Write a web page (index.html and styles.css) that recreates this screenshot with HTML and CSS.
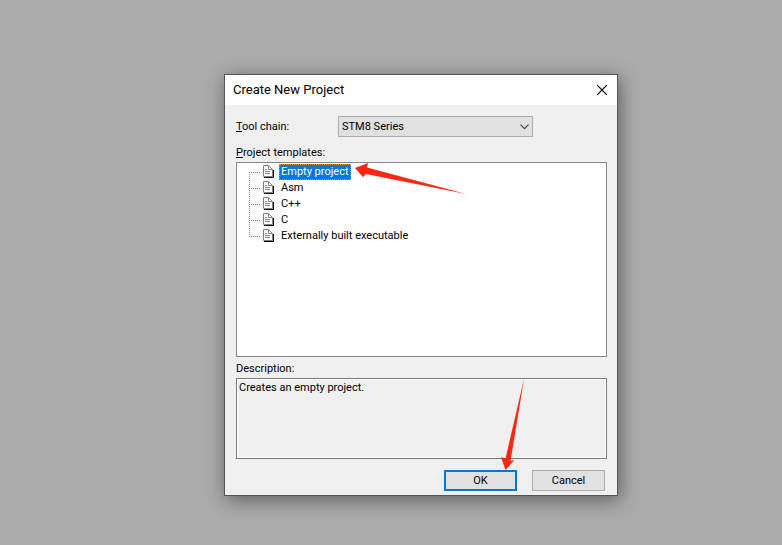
FILE: index.html
```
<!DOCTYPE html>
<html lang="en">
<head>
    <meta charset="UTF-8">
    <meta name="viewport" content="width=device-width, initial-scale=1.0">
    <title>Create New Project</title>
    <link rel="stylesheet" href="styles.css">
</head>
<body>
    <svg class="symbols" aria-hidden="true">
        <symbol id="page" viewBox="0 0 12 14">
            <path d="M.5 .5h5l4 4v7h-9z" fill="#fff" stroke="#808080"/>
            <path d="M5.500 .5v4h4" fill="none" stroke="#808080"/>
            <path d="M10.500 5v7.500H1" fill="none" stroke="#000"/>
            <path d="M2 4.500h2M2 6.500h5M2 8.500h5" stroke="#808080"/>
        </symbol>
    </svg>

    <form class="dialog" role="dialog" aria-labelledby="dialogTitle">
        <div class="title-bar">
            <h1 id="dialogTitle">Create New Project</h1>
            <button type="button" class="close-btn" aria-label="Close">
                <svg width="10" height="10" viewBox="0 0 10 10"><path d="M0 0l10 10M10 0L0 10" stroke="#000" stroke-width="1.2"/></svg>
            </button>
        </div>
        <div class="content">
            <div class="chain-row">
                <label for="toolChain"><u>T</u>ool chain:</label>
                <div class="select-wrap">
                    <select id="toolChain">
                        <option>STM8 Series</option>
                    </select>
                    <svg class="chevron" width="9" height="6" viewBox="0 0 9 6"><path d="M.5 .7l4 4 4-4" fill="none" stroke="#444" stroke-width="1.2"/></svg>
                </div>
            </div>

            <div class="field-label" id="templatesLabel"><u>P</u>roject templates:</div>
            <ul class="tree" role="tree" aria-labelledby="templatesLabel">
                <li role="treeitem" aria-selected="true"><svg class="page-icon"><use href="#page"/></svg><span class="name selected">Empty project</span></li>
                <li role="treeitem"><svg class="page-icon"><use href="#page"/></svg><span class="name">Asm</span></li>
                <li role="treeitem"><svg class="page-icon"><use href="#page"/></svg><span class="name">C++</span></li>
                <li role="treeitem"><svg class="page-icon"><use href="#page"/></svg><span class="name">C</span></li>
                <li role="treeitem"><svg class="page-icon"><use href="#page"/></svg><span class="name">Externally built executable</span></li>
            </ul>

            <label class="field-label" for="description">Description:</label>
            <textarea id="description" class="description" readonly>Creates an empty project.</textarea>

            <div class="buttons">
                <button type="submit" class="btn default">OK</button>
                <button type="button" class="btn">Cancel</button>
            </div>
        </div>

        <!-- Red pointer arrows -->
        <svg class="arrow arrow-template" width="112" height="32" viewBox="0 0 112 32" aria-hidden="true">
            <path d="M0 5L13 0 12 4.500 111 31 11 11 8 14z" fill="#ff2513"/>
        </svg>
        <svg class="arrow arrow-ok" width="24" height="92" viewBox="0 0 24 92" aria-hidden="true">
            <path d="M4.500 91L0 78l4.500 1.500L23 0 9.500 82 13.500 81z" fill="#ff2513"/>
        </svg>
    </form>
</body>
</html>
```
FILE: styles.css
```
* {
    box-sizing: border-box;
}
body {
    margin: 0;
    padding: 74px 164px 49px 224px;
    min-height: 100vh;
    background: #ababab;
    color: #000;
    font-family: Roboto, "Liberation Sans", sans-serif;
    font-size: 11px;
    line-height: 16px;
}
.symbols {
    display: none;
}
.dialog {
    position: relative;
    border: 1px solid #555;
    background: #f0f0f0;
    box-shadow: 2px 4px 18px rgba(0, 0, 0, 0.45);
}
.title-bar {
    display: flex;
    align-items: center;
    justify-content: space-between;
    height: 30px;
    padding: 0 10px 0 8px;
    background: #fff;
}
.title-bar h1 {
    margin: 0;
    font-size: 13px;
    font-weight: normal;
}
.close-btn {
    display: flex;
    padding: 0;
    border: none;
    background: none;
}
.content {
    padding: 11px 10px 4px 11px;
}
.chain-row {
    display: flex;
    align-items: center;
    margin-bottom: 8px;
}
.chain-row label {
    width: 102px;
}
.select-wrap {
    position: relative;
    width: 195px;
}
select {
    appearance: none;
    display: block;
    width: 100%;
    height: 21px;
    padding: 0 3px;
    border: 1px solid #adadad;
    border-radius: 0;
    background: #e1e1e1;
    color: #000;
    font: inherit;
}
.chevron {
    position: absolute;
    top: 8px;
    right: 4px;
    pointer-events: none;
}
.field-label {
    display: block;
    margin-bottom: 1px;
}
.tree {
    height: 195px;
    margin: 0 0 4px;
    padding: 1px 0 0 12px;
    border: 1px solid #828790;
    background: #fff;
    list-style: none;
}
.tree li {
    display: flex;
    align-items: center;
    height: 16px;
    /* dotted branch lines of the tree */
    background:
        repeating-linear-gradient(to right, #808080 0 1px, transparent 1px 2px) 0 8px / 12px 1px no-repeat,
        repeating-linear-gradient(to bottom, #808080 0 1px, transparent 1px 2px) 0 0 / 1px 16px no-repeat;
}
.tree li:first-child {
    background-position: 0 8px, 0 8px;
}
.tree li:last-child {
    background-size: 12px 1px, 1px 8px;
}
.page-icon {
    width: 12px;
    height: 14px;
    margin: 0 4px 0 14px;
}
.name {
    height: 16px;
    padding: 0 1px;
    border: 1px solid transparent;
    line-height: 14px;
}
.name.selected {
    border: 1px dotted #ff8728;
    background: #0078d7;
    color: #fff;
}
.description {
    display: block;
    width: 100%;
    height: 81px;
    padding: 1px 2px;
    border: 1px solid #7a7a7a;
    border-radius: 0;
    outline: none;
    resize: none;
    background: #f0f0f0;
    box-shadow: inset 0 0 0 1px #fff;
    color: #000;
    font: inherit;
}
.buttons {
    display: flex;
    justify-content: flex-end;
    gap: 15px;
    margin-top: 11px;
    padding-right: 2px;
}
.btn {
    width: 73px;
    height: 21px;
    padding: 0;
    border: 1px solid #adadad;
    background: #e1e1e1;
    color: #000;
    font: inherit;
}
.btn.default {
    border: 2px solid #0078d7;
}
.arrow {
    position: absolute;
    pointer-events: none;
}
.arrow-template {
    top: 88px;
    left: 130px;
}
.arrow-ok {
    top: 304px;
    left: 276px;
}
```
